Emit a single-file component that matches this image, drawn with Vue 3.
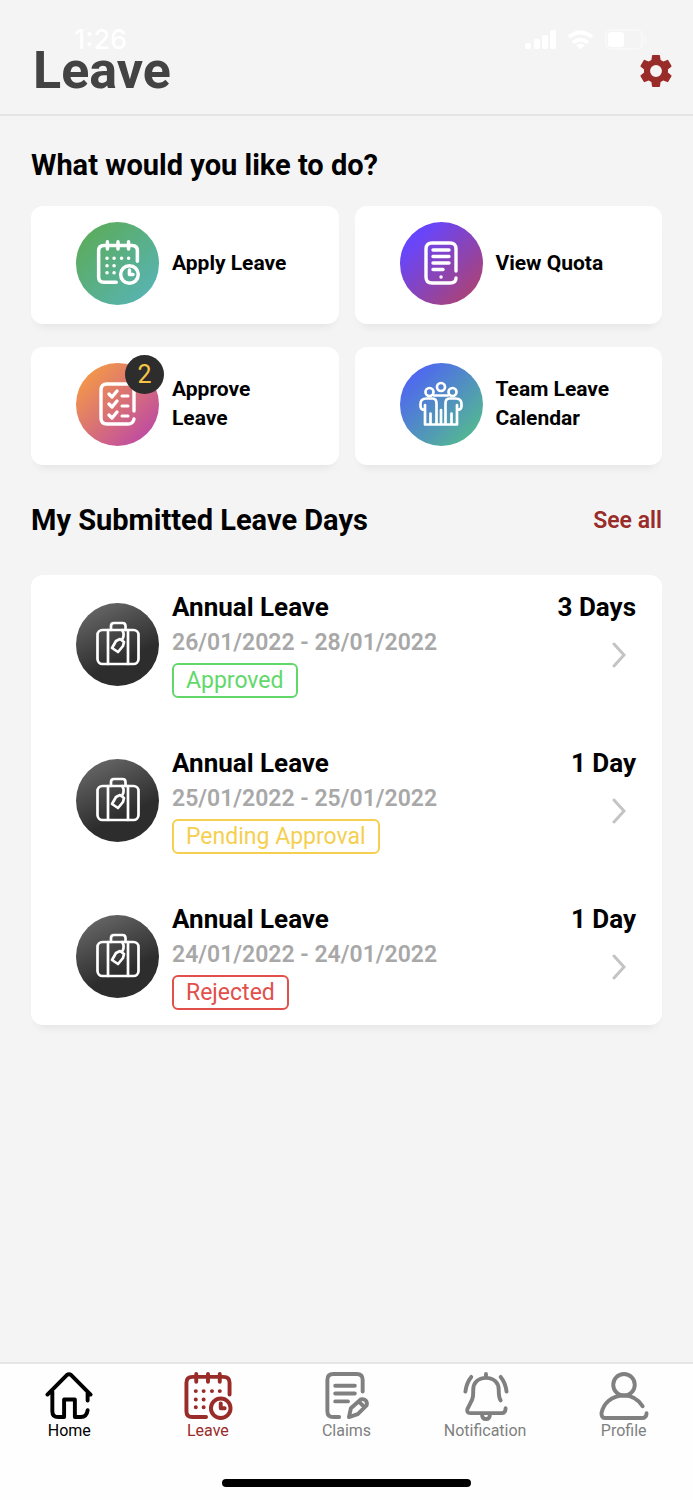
<script setup>
const actions = [
  { id: 'calendar', label: 'Apply Leave', tone: 'green' },
  { id: 'quota', label: 'View Quota', tone: 'violet' },
  { id: 'checklist', label: 'Approve Leave', tone: 'orange', count: 2 },
  { id: 'team', label: 'Team Leave Calendar', tone: 'blue' },
]

const requests = [
  { type: 'Annual Leave', dates: '26/01/2022 - 28/01/2022', length: '3 Days', status: 'Approved', tone: 'approved' },
  { type: 'Annual Leave', dates: '25/01/2022 - 25/01/2022', length: '1 Day', status: 'Pending Approval', tone: 'pending' },
  { type: 'Annual Leave', dates: '24/01/2022 - 24/01/2022', length: '1 Day', status: 'Rejected', tone: 'rejected' },
]

const tabs = [
  { id: 'home', label: 'Home' },
  { id: 'leave', label: 'Leave' },
  { id: 'claims', label: 'Claims' },
  { id: 'notification', label: 'Notification' },
  { id: 'profile', label: 'Profile' },
]
</script>

<template>
  <div class="screen">
    <header class="header">
      <div class="status-bar">
        <span class="clock">1:26</span>
        <svg class="status-icons" viewBox="0 0 122 22" aria-hidden="true">
          <g fill="#fff">
            <rect x="0" y="14" width="6" height="6" rx="2" />
            <rect x="9" y="10" width="6" height="10" rx="2" />
            <rect x="17" y="6" width="6" height="14" rx="2" />
            <rect x="25" y="1" width="6" height="19" rx="2" />
            <rect x="83" y="3" width="16" height="15" rx="3" />
            <path d="M51 16q5-3 9 0l-4.500 4.500z" />
          </g>
          <g fill="none" stroke="#fff" stroke-width="4">
            <path d="M44 8q11.500-9 23 0" />
            <path d="M48 13.500q7.500-6 15 0" />
          </g>
          <rect x="81" y="1" width="36" height="19" rx="5" fill="none" stroke="#f8f8f8" stroke-width="2" />
          <path d="M120 8v6" stroke="#f8f8f8" stroke-width="2" />
        </svg>
      </div>
      <div class="title-row">
        <h1>Leave</h1>
        <button class="settings" type="button" aria-label="Settings">
          <svg viewBox="2 2 20 20" aria-hidden="true">
            <path fill="currentColor" d="M19.430 12.980c.04-.32.07-.64.07-.98s-.03-.66-.07-.98l2.110-1.650c.19-.15.24-.42.12-.64l-2-3.460c-.12-.22-.39-.3-.61-.22l-2.490 1c-.52-.4-1.080-.73-1.690-.98l-.38-2.650C14.460 2.180 14.250 2 14 2h-4c-.25 0-.46.18-.49.42l-.38 2.650c-.61.25-1.170.59-1.690.98l-2.490-1c-.23-.09-.49 0-.61.22l-2 3.460c-.13.22-.07.49.12.64l2.110 1.650c-.04.32-.07.65-.07.98s.03.66.07.98l-2.110 1.650c-.19.15-.24.42-.12.64l2 3.460c.12.22.39.3.61.22l2.490-1c.52.4 1.080.73 1.690.98l.38 2.650c.03.24.24.42.49.42h4c.25 0 .46-.18.49-.42l.38-2.650c.61-.25 1.170-.59 1.690-.98l2.490 1c.23.09.49 0 .61-.22l2-3.460c.12-.22.07-.49-.12-.64zM12 15.700a3.700 3.700 0 1 1 0-7.400a3.700 3.700 0 0 1 0 7.400z" />
          </svg>
        </button>
      </div>
    </header>

    <main class="content">
      <h2>What would you like to do?</h2>
      <div class="actions">
        <button v-for="a in actions" :key="a.id" class="action" type="button">
          <span class="disc" :class="a.tone">
            <svg v-if="a.id === 'calendar'" class="glyph" viewBox="0 0 50 50" stroke-width="4" aria-hidden="true">
              <path d="M23 47H9q-6 0-6-6V11q0-6 6-6h32q6 0 6 6v12M13 1v8M25 1v8M37 1v8" />
              <circle cx="38" cy="38" r="10" />
              <path d="M38 33v5h4" />
              <path d="M12.500 19.500h.1M20.500 19.500h.1M29 19.500h.1M37 19.500h.1M12.500 28h.1M20.500 28h.1M12.500 36h.1M20.500 36h.1" />
            </svg>
            <svg v-else-if="a.id === 'quota'" class="glyph" viewBox="0 0 44 44" stroke-width="3.400" aria-hidden="true">
              <path d="M37 30V8q0-6-6-6H13q-6 0-6 6v28q0 6 6 6h18q6 0 6-5" />
              <path d="M14 9h16M14 15.500h16M14 22h16M14 28.500h10" />
              <path d="M22 36h.1" />
            </svg>
            <svg v-else-if="a.id === 'checklist'" class="glyph" viewBox="0 0 44 44" stroke-width="3" aria-hidden="true">
              <path stroke-width="3.400" d="M38 29V8q0-6-6-6H11q-6 0-6 6v28q0 6 6 6h21q5 0 6-5" />
              <path stroke-width="3.400" d="M13 12l3 3 5-6M13 22l3 3 5-6M13 33l3 3 5-6" />
              <path d="M26 14h6M26 24h6M26 34h6" />
            </svg>
            <svg v-else class="glyph" viewBox="0 0 44 44" stroke-width="2.700" aria-hidden="true">
              <circle cx="22" cy="5" r="4" />
              <circle cx="10.500" cy="10" r="4" />
              <circle cx="33.500" cy="10" r="4" />
              <path d="M15 13.500h14" />
              <path d="M6 23v19.500h32V23M6 28c-3 0-4.500-1-4.500-4v-2c0-4 2-5.500 6-5.500h6c3 0 4 2 4 5v21M26.500 42.500v-21c0-3 1-5 4-5h6c4 0 6 1.500 6 5.500v2c0 3-1.500 4-4.500 4M11.500 42V31.500M22 42V28M32.500 42V31.500" />
            </svg>
            <span v-if="a.count" class="count">{{ a.count }}</span>
          </span>
          <span class="action-label">{{ a.label }}</span>
        </button>
      </div>

      <div class="section-head">
        <h2>My Submitted Leave Days</h2>
        <a href="#all">See all</a>
      </div>

      <ul class="requests">
        <li v-for="r in requests" :key="r.dates" class="request">
          <span class="disc dark">
            <svg class="glyph" viewBox="0 0 44 44" stroke-width="2.700" aria-hidden="true">
              <rect x="1.500" y="8" width="41" height="34" rx="5" />
              <path d="M12 8v34M32 8v34M15 8V4q0-3 3-3h8.500q3 0 3 3v4" />
              <path d="M26 8q3 4 .5 9M24 17l4 3-1 4-5 6-6-4 4-7z" />
            </svg>
          </span>
          <div class="details">
            <h3>{{ r.type }}</h3>
            <p class="dates">{{ r.dates }}</p>
            <span class="badge" :class="r.tone">{{ r.status }}</span>
          </div>
          <div class="length">
            <span>{{ r.length }}</span>
            <svg class="chevron" viewBox="0 0 14 26" aria-hidden="true">
              <path d="M2 2l10 11L2 24" />
            </svg>
          </div>
        </li>
      </ul>
    </main>

    <footer class="footer">
      <nav class="tabs" aria-label="Main">
        <a v-for="t in tabs" :key="t.id" class="tab" :class="t.id" :href="'#' + t.id">
          <svg class="tab-icon" viewBox="0 0 50 50" aria-hidden="true">
            <template v-if="t.id === 'home'">
              <path d="M3 23L23 3q2-1.500 4 0l20 20M8 20v20q0 6 6 6h6V28h11v18h6q6 0 7-7M44 20v9" />
            </template>
            <template v-else-if="t.id === 'leave'">
              <path d="M23 46H9q-6 0-6-6V11q0-6 6-6h32q6 0 6 6v12M13 2v8M25 2v8M37 2v8" />
              <circle cx="38" cy="37" r="10" />
              <path d="M38 32v5h4" />
              <path d="M12.500 19.500h.1M20.500 19.500h.1M29 19.500h.1M37 19.500h.1M12.500 28h.1M20.500 28h.1M12.500 36h.1M20.500 36h.1" />
            </template>
            <template v-else-if="t.id === 'claims'">
              <path d="M18 46h-6q-6 0-6-6V8q0-6 6-6h24q6 0 6 6v12M14 14h20M14 22h20M14 30h13" />
              <path d="M28 46l2-9 10-9q3-1 5 1t1 5L37 43zM38 30l5 5" />
            </template>
            <template v-else-if="t.id === 'notification'">
              <path d="M26 2v4M41 29c-2-3-2-6-2-11 0-7-5-12-13-12s-13 5-13 12c0 6 0 9-3 14l-3 6q-1 4 3 4h32q4 0 4-5" />
              <path d="M22 43q0 5 4 5t4-5M11 5q-5 6-6 15M41 5q5 6 6 15" />
            </template>
            <template v-else>
              <circle cx="25" cy="13" r="11" />
              <path d="M44 35C39 27 33 24 25 24 12 24 4 32 2 42q0 5 4 5h37q5 0 5-5" />
            </template>
          </svg>
          <span>{{ t.label }}</span>
        </a>
      </nav>
      <div class="home-indicator"></div>
    </footer>
  </div>
</template>

<style>
body {
  margin: 0;
  background: #f4f4f4;
}
</style>

<style scoped>
.screen {
  display: flex;
  flex-direction: column;
  min-height: 100vh;
  background: #f4f4f4;
  color: #000;
  font-family: Roboto, "Liberation Sans", sans-serif;
}

h1,
h2,
h3,
p,
ul {
  margin: 0;
  padding: 0;
}

button {
  border: 0;
  padding: 0;
  font: inherit;
  color: inherit;
  cursor: pointer;
}

a {
  color: inherit;
  text-decoration: none;
}

.header {
  padding: 29px 21px 23px 33px;
  border-bottom: 2px solid #e4e4e5;
}

.status-bar {
  display: flex;
  align-items: center;
  justify-content: space-between;
  height: 22px;
  padding: 0 25px 0 41px;
}

.clock {
  color: #fff;
  font: 500 27px/22px Inter, sans-serif;
}

.status-icons {
  width: 122px;
  height: 22px;
}

.title-row {
  display: flex;
  align-items: center;
  justify-content: space-between;
}

h1 {
  color: #434343;
  font-size: 52px;
  line-height: 40px;
}

.settings {
  display: flex;
  background: none;
  color: #992b29;
}

.settings svg {
  width: 32px;
  height: 32px;
}

.content {
  flex: 1;
  padding: 31px 31px 24px;
}

h2 {
  font-size: 29px;
  line-height: 36px;
}

.actions {
  display: grid;
  grid-template-columns: 1fr 1fr;
  gap: 23px 16px;
  margin-top: 23px;
}

.action {
  display: flex;
  align-items: center;
  gap: 13px;
  min-height: 118px;
  padding: 0 40px 4px 45px;
  border-radius: 12px;
  background: #fff;
  box-shadow: 0 8px 10px -6px rgba(0, 0, 0, 0.08);
  text-align: left;
}

.action-label {
  font-size: 21px;
  font-weight: 700;
  line-height: 29px;
}

.disc {
  position: relative;
  display: flex;
  flex: none;
  align-items: center;
  justify-content: center;
  width: 83px;
  height: 83px;
  border-radius: 50%;
  color: #fff;
}

.green {
  background: linear-gradient(135deg, #5bac60 15%, #58b3ad 85%);
}

.violet {
  background: linear-gradient(135deg, #6845fa 20%, #a8437c 85%);
}

.orange {
  background: linear-gradient(135deg, #f1954c 15%, #c04e9f 85%);
}

.blue {
  background: linear-gradient(135deg, #4f68f0 15%, #53b595 85%);
}

.dark {
  background: linear-gradient(155deg, #6a6a6a 5%, #2d2d2d 65%);
}

.glyph {
  width: 44px;
  height: 44px;
  overflow: visible;
  fill: none;
  stroke: currentColor;
  stroke-linecap: round;
  stroke-linejoin: round;
}

.count {
  position: absolute;
  top: -8px;
  right: -5px;
  width: 39px;
  height: 39px;
  border-radius: 50%;
  background: #2d2d2d;
  color: #f8c545;
  font-size: 25px;
  line-height: 39px;
  text-align: center;
}

.section-head {
  display: flex;
  align-items: center;
  justify-content: space-between;
  margin-top: 37px;
}

.section-head a {
  color: #992b29;
  font-size: 23px;
  font-weight: 600;
}

.requests {
  display: flex;
  flex-direction: column;
  gap: 48px;
  margin-top: 37px;
  padding: 15px 26px 15px 45px;
  border-radius: 12px;
  background: #fff;
  box-shadow: 0 8px 10px -6px rgba(0, 0, 0, 0.08);
  list-style: none;
}

.request {
  display: flex;
  align-items: center;
  gap: 13px;
}

.details {
  display: flex;
  flex: 1;
  flex-direction: column;
  align-items: flex-start;
}

h3 {
  font-size: 26px;
  line-height: 35px;
}

.dates {
  color: #a8a8a8;
  font-size: 23px;
  font-weight: 600;
  line-height: 35px;
}

.badge {
  margin-top: 3px;
  padding: 0 12px;
  border: 2px solid;
  border-radius: 6px;
  font-size: 23px;
  line-height: 31px;
}

.approved {
  color: #62d86b;
}

.pending {
  color: #f5cf50;
}

.rejected {
  color: #e1504b;
}

.length {
  display: flex;
  flex-direction: column;
  align-self: flex-start;
  align-items: flex-end;
  gap: 17px;
  font-size: 26px;
  font-weight: 700;
  line-height: 35px;
}

.chevron {
  width: 14px;
  height: 26px;
  margin-right: 10px;
  fill: none;
  stroke: #c4c4c4;
  stroke-width: 3;
  stroke-linecap: round;
}

.footer {
  padding: 8px 0 13px;
  border-top: 2px solid #e6e6e6;
  background: #fefefe;
}

.tabs {
  display: grid;
  grid-template-columns: repeat(5, 1fr);
}

.tab {
  display: flex;
  flex-direction: column;
  align-items: center;
  color: #808080;
  font-size: 16px;
  line-height: 20px;
}

.tab-icon {
  width: 50px;
  height: 49px;
  fill: none;
  stroke: currentColor;
  stroke-width: 4;
  stroke-linecap: round;
  stroke-linejoin: round;
}

.tab.home {
  color: #000;
}

.tab.leave {
  color: #992b29;
}

.home-indicator {
  width: 36%;
  height: 8px;
  margin: 38px auto 0;
  border-radius: 4px;
  background: #000;
}
</style>
